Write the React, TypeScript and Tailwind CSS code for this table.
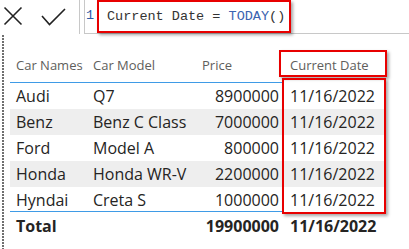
import React from "react";

type Row = { name: string; model: string; price: string; shade: boolean; h: string };

const rows: Row[] = [
  { name: "Audi", model: "Q7", price: "8900000", shade: false, h: "h-[26px]" },
  { name: "Benz", model: "Benz C Class", price: "7000000", shade: true, h: "h-[26px]" },
  { name: "Ford", model: "Model A", price: "800000", shade: false, h: "h-[26px]" },
  { name: "Honda", model: "Honda WR-V", price: "2200000", shade: true, h: "h-[26px]" },
  { name: "Hyndai", model: "Creta S", price: "1000000", shade: false, h: "h-[24px]" },
];

const DATE = "11/16/2022";

function CommitIcons() {
  return (
    <svg width="79" height="34" viewBox="0 0 79 34" fill="none">
      <path d="M4.5 7.5 L21.5 24.5 M21.5 7.5 L4.5 24.5" stroke="#222" strokeWidth="1.6" />
      <path d="M42 16 L49.5 24.5 L65 9" stroke="#222" strokeWidth="1.6" />
    </svg>
  );
}

export default function App() {
  return (
    <div className="w-[409px] h-[249px] bg-white overflow-hidden font-['Open_Sans',sans-serif] text-[#252423]">
      {/* formula bar */}
      <div className="flex h-[34px]">
        <div className="w-[80px] border-r border-[#c8c8c8]">
          <CommitIcons />
        </div>
        <div className="w-[4px]" />
        <div className="flex-1 flex border-l border-b border-[#c8c8c8]">
          <span className="w-[12px] pl-[1px] pt-[7px] text-[13.5px] leading-[18px] font-['Liberation_Mono',monospace] text-[#2b5aa8]">
            1
          </span>
          <div className="w-[194px] h-[33px] border-2 border-[#e80000] shadow-[2px_2px_3px_rgba(0,0,0,0.35)] pl-[8px] pt-[6px] text-[13.5px] leading-[18px] font-['Liberation_Mono',monospace] whitespace-pre text-[#333]">
            Current Date = <span className="text-[#3a63b0]">TODAY</span>()
          </div>
        </div>
      </div>

      {/* visual area */}
      <div className="flex h-[215px]">
        <div className="w-[2px] ml-[2px] mt-[1px] bg-[repeating-linear-gradient(to_bottom,#6f6f6f_0_2px,transparent_2px_3px)]" />
        <div className="relative ml-[6px] w-[376px]">
          {/* header */}
          <div className="grid grid-cols-[77px_108px_88px_103px] pt-[22px] pb-[8px] text-[13px] leading-[18px] text-[#605e5c]">
            <div className="pl-[6px]">Car Names</div>
            <div className="pl-[6px]">Car Model</div>
            <div className="pl-[7px]">Price</div>
            <div className="pl-[7px]">Current Date</div>
          </div>
          <div className="h-[1px] w-[273px] bg-[#3f9be6]" />

          {/* body */}
          {rows.map((r) => (
            <div
              key={r.name}
              className={`grid grid-cols-[77px_108px_88px_103px] ${r.h} text-[16px] leading-[26px] ${
                r.shade ? "bg-[#eeeeee]" : ""
              }`}
            >
              <div className="pl-[6px]">{r.name}</div>
              <div className="pl-[6px] whitespace-nowrap">{r.model}</div>
              <div className="pr-[4px] text-right">{r.price}</div>
              <div className="pl-[7px]">{DATE}</div>
            </div>
          ))}
          <div className="h-[1px] w-[273px] bg-[#3f9be6]" />

          {/* totals */}
          <div className="grid grid-cols-[77px_108px_88px_103px] text-[16px] leading-[28px] font-bold">
            <div className="pl-[6px]">Total</div>
            <div />
            <div className="pr-[4px] text-right">19900000</div>
            <div className="pl-[7px]">{DATE}</div>
          </div>

          {/* highlight frames */}
          <div className="absolute left-[269px] top-[16px] w-[108px] h-[27px] border-2 border-[#e80000] shadow-[2px_2px_3px_rgba(0,0,0,0.35)]" />
          <div className="absolute left-[272px] top-[44px] w-[104px] h-[136px] border-2 border-[#e80000] shadow-[2px_2px_3px_rgba(0,0,0,0.35)]" />
        </div>
      </div>
    </div>
  );
}
